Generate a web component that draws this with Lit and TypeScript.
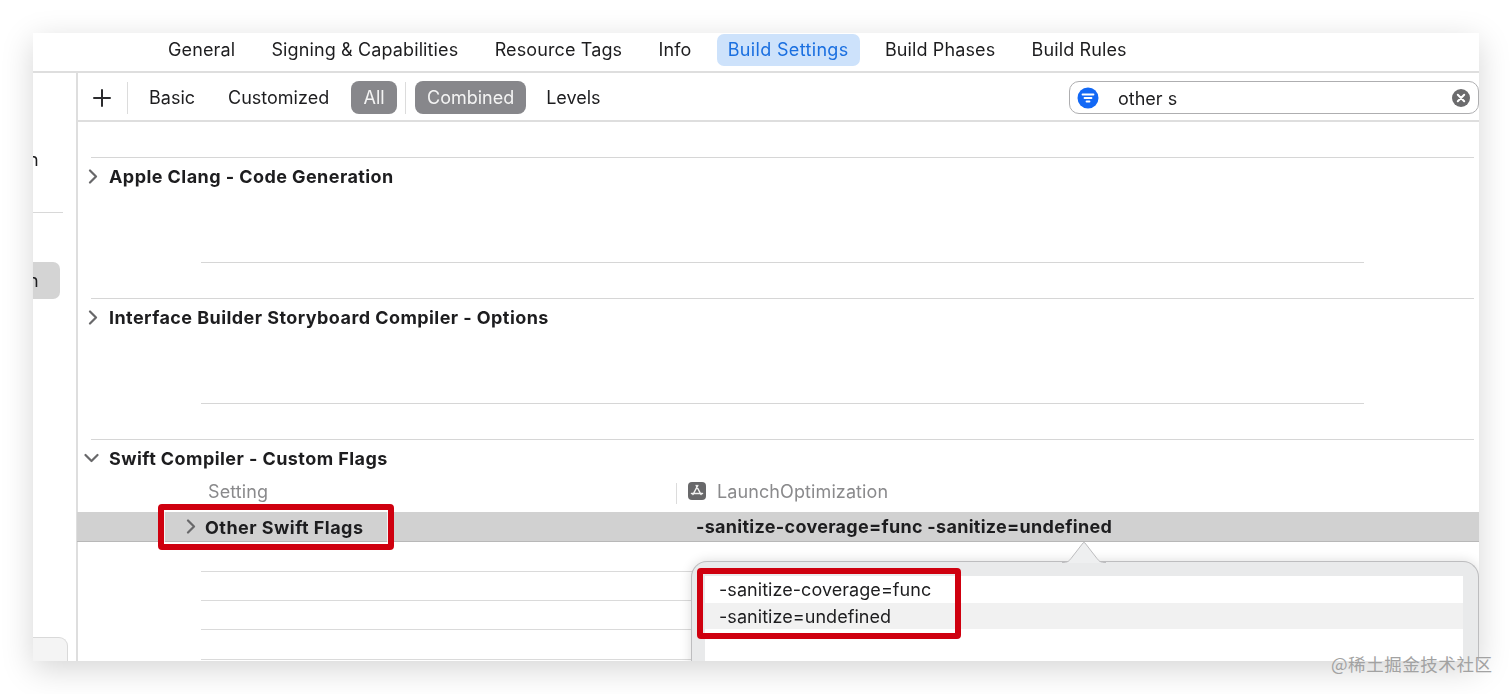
import { LitElement, html, css, svg } from "lit";
import { customElement } from "lit/decorators.js";

const chevR = svg`<path d="M2 1.5 L8 7.5 L2 13.5" fill="none" stroke="#68686a" stroke-width="2.2" stroke-linecap="round" stroke-linejoin="round"/>`;

@customElement("app-root")
export class AppRoot extends LitElement {
  static styles = css`
    :host { display: block; position: relative; width: 1512px; height: 694px; overflow: hidden; background: #fff;
      font-family: Inter, "Noto Sans", sans-serif; color: #1d1d1f; font-size: 18px; }
    * { box-sizing: border-box; }
    .stage { padding: 33px 33px 0; filter: blur(0.35px); }
    .window { position: relative; width: 1446px; height: 628px; background: #fff; overflow: hidden; }
    .shadowbox { width: 1446px; height: 628px; box-shadow: 0 8px 30px rgba(0,0,0,.17); }
    .tabs { height: 40px; display: flex; align-items: flex-start; padding: 1px 0 0 124px; gap: 14.3px; border-bottom: 2px solid #dedede; }
    .tab { height: 32px; padding: 0 11px 2px; border-radius: 7px; display: flex; align-items: center; white-space: nowrap; letter-spacing: .12px; }
    .tab.on { background: #cde2fb; color: #1a6fe0; letter-spacing: .34px; }
    .body { display: flex; height: 588px; }
    .side { width: 45px; margin-right: -1px; flex: none; border-right: 2px solid #dedede; display: flex; flex-direction: column; position: relative; }
    .sn { height: 37px; line-height: 37px; margin-left: -5px; font-size: 18px; }
    .sn.first { margin-top: 68px; }
    .sline { height: 1px; width: 30px; background: #d8d8d8; margin-top: 34px; }
    .ssel { margin-top: 49px; width: 27px; height: 37px; background: #d4d4d4; border-radius: 0 7px 7px 0; overflow: hidden; }
    .sfoot { margin-top: auto; height: 24px; width: 35px; background: #f4f4f4; border: 1px solid #d9d9d9; border-left: 0; border-bottom: 0; border-radius: 0 9px 0 0; }
    .main { flex: 1; min-width: 0; position: relative; }
    .bar { height: 49px; display: flex; align-items: center; border-bottom: 2px solid #dedede; position: relative; padding-top: 2px; }
    .plus { width: 50px; display: flex; justify-content: center; flex: none; }
    .vr { width: 1px; height: 32px; background: #dcdcdc; flex: none; }
    .fl { white-space: nowrap; letter-spacing: 0; }
    .pill { height: 33px; border-radius: 8px; background: #87878b; color: #f4f4f4; display: flex; align-items: center; justify-content: center; white-space: nowrap; letter-spacing: 0; }
    .b1 { margin-left: 21px; }
    .b2 { margin-left: 33px; }
    .pall { margin-left: 22px; width: 46px; }
    .vr.v2 { margin-left: 8px; }
    .pcom { margin-left: 9px; width: 111px; }
    .b3 { margin-left: 20px; }
    .search { margin-left: auto; width: 410px; height: 33px; border: 1px solid #aeaeb0; border-radius: 10px; display: flex; align-items: center; padding: 0 8px 0 7px; background: #fff; }
    .search span { margin-left: 19px; flex: 1; padding-top: 1px; }
    .scroll { padding-top: 35px; }
    .sec { height: 141px; }
    .rule { height: 1px; background: #d6d6d6; margin: 0 5px 0 14px; }
    .head { height: 38px; display: flex; align-items: center; padding: 0 0 2px 11px; font-weight: 700; letter-spacing: .43px; }
    .head svg { margin-right: 11px; flex: none; }
    .head svg.down { margin-left: -4px; margin-right: 10px; }
    .inner { height: 1px; background: #d6d6d6; margin: 66px 115px 0 124px; }
    .cols { height: 34px; display: flex; align-items: flex-start; color: #8a8a8c; letter-spacing: .1px; }
    .cols .c1 { width: 599px; padding: 3px 0 0 131px; }
    .cols .c2 { display: flex; align-items: flex-start; }
    .cols .c2 .vr { height: 21px; margin-top: 5px; }
    .cols .c2 svg { margin: 4px 11px 0 11px; }
    .cols .c2 span { padding-top: 3px; }
    .row { height: 30px; display: flex; align-items: center; background: #d1d1d1; border-bottom: 1px solid #b8b8b8; font-weight: 700; letter-spacing: .29px; position: relative; }
    .row .n { width: 619px; padding: 2px 0 0 109px; display: flex; align-items: center; letter-spacing: .46px; }
    .row .n svg { margin: -2px 9px 0 0; }
    .line { height: 1px; background: #dadada; margin: 28px 115px 0 124px; }
    .line.l1 { margin-top: 29px; }
    .line.l4 { margin-top: 29px; }
    .pop { position: absolute; left: 614px; top: 488px; width: 788px; height: 120px; background: #e9eaeb; border: 1px solid #bdbdbf; border-bottom: 0; border-radius: 16px 16px 0 0; padding: 14px 15px 0 13px; box-shadow: 0 0 12px rgba(0,0,0,.14); }
    .arrow { position: absolute; left: 370px; top: -21px; width: 44px; height: 22px; }
    .list { background: #fff; height: 200px; padding-top: 0; }
    .li { height: 26.5px; display: flex; align-items: center; padding: 1px 0 0 14px; letter-spacing: .05px; }
    .li.alt { background: #f1f1f1; }
    .red { position: absolute; border: 6px solid #cf000f; border-radius: 4px; pointer-events: none; }
    .r1 { left: 125px; top: 471px; width: 236px; height: 46px; box-shadow: inset 0 0 0 1px rgba(255,255,255,.75); }
    .r2 { left: 664px; top: 535px; width: 264px; height: 71px; }
    .mark { position: absolute; left: 1331px; top: 651px; font: 400 17.5px "Noto Sans CJK SC", sans-serif; color: #a2a2a2; letter-spacing: .55px; white-space: nowrap; }
  `;

  render() {
    const chevron = html`<svg width="10" height="15" viewBox="0 0 10 15">${chevR}</svg>`;
    return html`
      <div class="stage">
        <div class="shadowbox">
          <div class="window">
            <div class="tabs">
              <div class="tab">General</div>
              <div class="tab">Signing &amp; Capabilities</div>
              <div class="tab">Resource Tags</div>
              <div class="tab">Info</div>
              <div class="tab on">Build Settings</div>
              <div class="tab">Build Phases</div>
              <div class="tab">Build Rules</div>
            </div>
            <div class="body">
              <div class="side">
                <div class="sn first">n</div>
                <div class="sline"></div>
                <div class="ssel"><div class="sn">n</div></div>
                <div class="sfoot"></div>
              </div>
              <div class="main">
                <div class="bar">
                  <div class="plus">
                    <svg width="18" height="18" viewBox="0 0 18 18"><path d="M9 1V17M1 9H17" stroke="#2b2b2d" stroke-width="2" stroke-linecap="round"/></svg>
                  </div>
                  <div class="vr"></div>
                  <div class="fl b1">Basic</div>
                  <div class="fl b2">Customized</div>
                  <div class="pill pall">All</div>
                  <div class="vr v2"></div>
                  <div class="pill pcom">Combined</div>
                  <div class="fl b3">Levels</div>
                  <div class="search">
                    <svg width="22" height="22" viewBox="0 0 22 22">
                      <circle cx="11" cy="11" r="10.5" fill="#1268f5"/>
                      <path d="M5.5 7.5H16.5M7.5 11H14.5M9.5 14.5H12.5" stroke="#fff" stroke-width="1.8" stroke-linecap="round"/>
                    </svg>
                    <span>other s</span>
                    <svg width="18" height="18" viewBox="0 0 18 18">
                      <circle cx="9" cy="9" r="9" fill="#6b6b6d"/>
                      <path d="M5.8 5.8L12.2 12.2M12.2 5.8L5.8 12.2" stroke="#fff" stroke-width="2" stroke-linecap="round"/>
                    </svg>
                  </div>
                </div>
                <div class="scroll">
                  <div class="sec">
                    <div class="rule"></div>
                    <div class="head">${chevron}Apple Clang - Code Generation</div>
                    <div class="inner"></div>
                  </div>
                  <div class="sec">
                    <div class="rule"></div>
                    <div class="head">${chevron}Interface Builder Storyboard Compiler - Options</div>
                    <div class="inner"></div>
                  </div>
                  <div class="rule"></div>
                  <div class="head">
                    <svg class="down" width="15" height="10" viewBox="0 0 15 10"><path d="M1.5 2 L7.5 8 L13.5 2" fill="none" stroke="#68686a" stroke-width="2.2" stroke-linecap="round" stroke-linejoin="round"/></svg>Swift Compiler - Custom Flags
                  </div>
                  <div class="cols">
                    <div class="c1">Setting</div>
                    <div class="c2">
                      <div class="vr"></div>
                      <svg width="18" height="18" viewBox="0 0 18 18">
                        <rect width="18" height="18" rx="4" fill="#68686a"/>
                        <path d="M9.8 3.5L5 12.5M8.2 3.5L13 12.5M3.5 11.5H14.5" stroke="#f2f2f2" stroke-width="1.5" stroke-linecap="round" fill="none"/>
                      </svg>
                      <span>LaunchOptimization</span>
                    </div>
                  </div>
                  <div class="row">
                    <div class="n">${chevron}<span>Other Swift Flags</span></div>
                    <div>-sanitize-coverage=func -sanitize=undefined</div>
                  </div>
                  <div class="line l1"></div>
                  <div class="line"></div>
                  <div class="line"></div>
                  <div class="line l4"></div>
                </div>
                <div class="pop">
                  <svg class="arrow" viewBox="0 0 44 22">
                    <path d="M0 21.5 C6 21.5 7 20 9 17.5 L21 2 Q22 .8 23 2 L35 17.5 C37 20 38 21.5 44 21.5 V22 H0 Z" fill="#eeeff0"/>
                    <path d="M0 21.5 C6 21.5 7 20 9 17.5 L21 2 Q22 .8 23 2 L35 17.5 C37 20 38 21.5 44 21.5" fill="none" stroke="#bdbdbf"/>
                  </svg>
                  <div class="list">
                    <div class="li">-sanitize-coverage=func</div>
                    <div class="li alt">-sanitize=undefined</div>
                  </div>
                </div>
              </div>
            </div>
            <div class="red r1"></div>
            <div class="red r2"></div>
          </div>
        </div>
      </div>
      <div class="mark">@稀土掘金技术社区</div>
    `;
  }
}
